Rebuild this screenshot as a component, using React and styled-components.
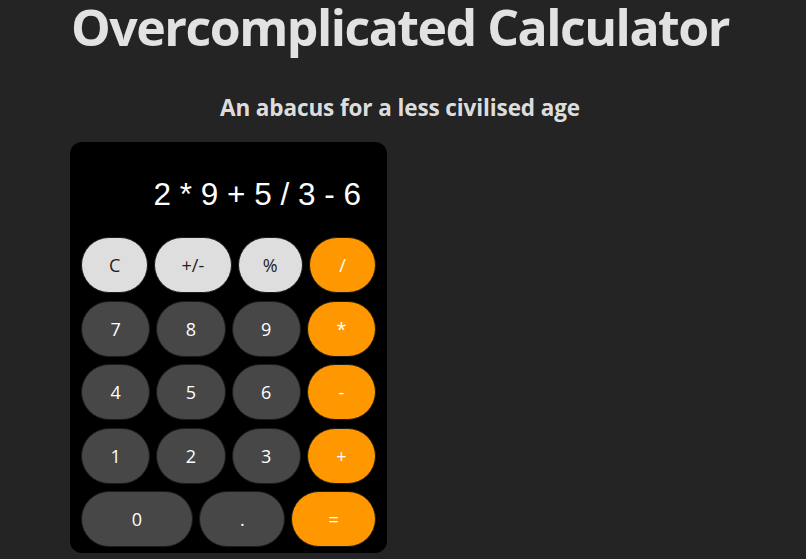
import React from "react";
import styled, { createGlobalStyle } from "styled-components";

const GlobalStyle = createGlobalStyle`
  html, body {
    margin: 0;
    padding: 0;
    background: #242424;
  }
  body {
    font-family: "Open Sans", "Noto Sans", sans-serif;
    color: rgba(255, 255, 255, 0.87);
    overflow: hidden;
  }
`;

const StyledPage = styled.div`
  display: flex;
  flex-direction: column;
  width: 660px;
  margin-left: 70px;
`;

const StyledTitle = styled.h1`
  margin: 0;
  font-size: 50px;
  line-height: 1.1;
  font-weight: 700;
  text-align: center;
  white-space: nowrap;
  letter-spacing: -1.5px;
`;

const StyledSubtitle = styled.h3`
  margin: 39px 0 0;
  font-size: 22.5px;
  line-height: 1.2;
  font-weight: 700;
  text-align: center;
  letter-spacing: -0.1px;
`;

const StyledCalculator = styled.div`
  display: flex;
  flex-direction: column;
  align-self: flex-start;
  width: 317px;
  box-sizing: border-box;
  margin-top: 21px;
  padding: 0 11px 6px;
  background: #000;
  border-radius: 12px;
`;

const StyledDisplay = styled.div`
  padding: 34px 15px 25px 0;
  font-family: "Liberation Sans", Arial, sans-serif;
  font-size: 31.5px;
  line-height: 36px;
  color: #fff;
  text-align: right;
  white-space: pre;
`;

const StyledKeypad = styled.div`
  display: flex;
  flex-direction: column;
  gap: 7.5px;
`;

const StyledRow = styled.div`
  display: flex;
  gap: 6px;
`;

const palette = {
  light: { bg: "#dedede", fg: "#1f1f1f" },
  dark: { bg: "#474747", fg: "#ffffff" },
  orange: { bg: "#ff9800", fg: "#ffffff" },
};

const StyledKey = styled.button`
  flex: ${(p) => p.$grow} 1 0;
  min-width: 0;
  height: 56px;
  padding: 0;
  border: 1px solid #1a1a1a;
  border-radius: 28px;
  background: ${(p) => palette[p.$kind].bg};
  color: ${(p) => palette[p.$kind].fg};
  font-family: "Open Sans", "Noto Sans", sans-serif;
  font-size: 18px;
  font-weight: 400;
  cursor: pointer;
`;

const rows = [
  [
    ["C", "light", 68],
    ["+/-", "light", 79],
    ["%", "light", 66],
    ["/", "orange", 68],
  ],
  [
    ["7", "dark", 68],
    ["8", "dark", 68],
    ["9", "dark", 68],
    ["*", "orange", 68],
  ],
  [
    ["4", "dark", 68],
    ["5", "dark", 68],
    ["6", "dark", 68],
    ["-", "orange", 68],
  ],
  [
    ["1", "dark", 68],
    ["2", "dark", 68],
    ["3", "dark", 68],
    ["+", "orange", 68],
  ],
  [
    ["0", "dark", 112],
    [".", "dark", 86],
    ["=", "orange", 84],
  ],
];

const App = () => {
  return (
    <>
      <GlobalStyle />
      <StyledPage>
        <StyledTitle>Overcomplicated Calculator</StyledTitle>
        <StyledSubtitle>An abacus for a less civilised age</StyledSubtitle>
        <StyledCalculator>
          <StyledDisplay>2 * 9 + 5 / 3 - 6</StyledDisplay>
          <StyledKeypad>
            {rows.map((row, rowIndex) => (
              <StyledRow key={rowIndex}>
                {row.map(([label, kind, grow]) => (
                  <StyledKey key={label} $kind={kind} $grow={grow}>
                    {label}
                  </StyledKey>
                ))}
              </StyledRow>
            ))}
          </StyledKeypad>
        </StyledCalculator>
      </StyledPage>
    </>
  );
};

export default App;
